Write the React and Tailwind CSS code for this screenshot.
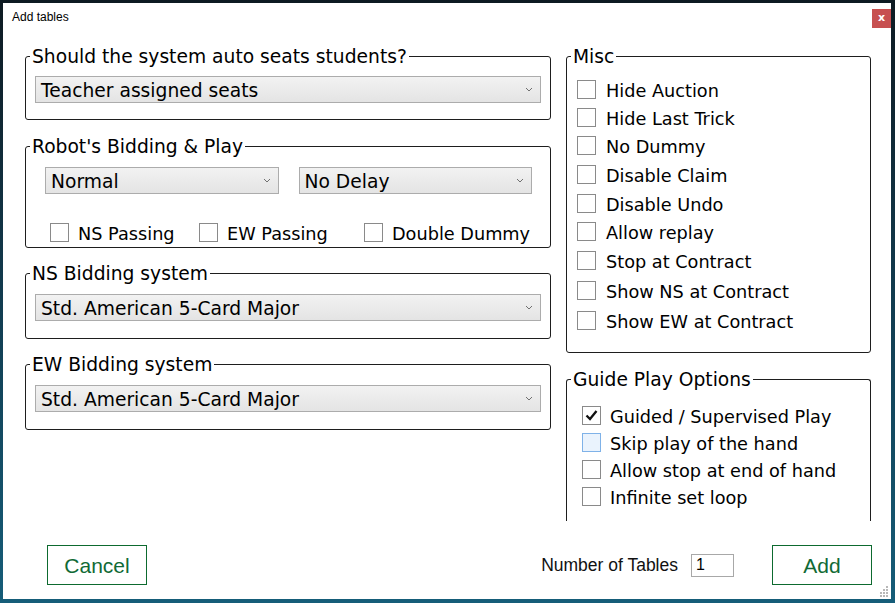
import React from "react";

function Chevron() {
  return (
    <svg width="8" height="5" viewBox="0 0 8 5" className="shrink-0">
      <path d="M1 1 L4 4 L7 1" fill="none" stroke="#707070" strokeWidth="1" />
    </svg>
  );
}

function Select({ value }) {
  return (
    <div className="h-[27px] border border-[#acacac] bg-linear-to-b from-[#f2f2f2] to-[#e4e4e4] flex items-center justify-between pl-[5px] pr-[7px]">
      <span className="pt-[2px] text-[18.7px] leading-[22px] text-black whitespace-nowrap">{value}</span>
      <Chevron />
    </div>
  );
}

function Box({ checked, focus }) {
  return (
    <span
      className={
        focus
          ? "w-[19px] h-[19px] shrink-0 border border-[#7fb2e8] bg-[#eaf3fd]"
          : "w-[19px] h-[19px] shrink-0 border border-[#8a8a8a] bg-white flex items-center justify-center"
      }
    >
      {checked && (
        <svg width="17" height="17" viewBox="0 0 17 17">
          <path d="M3.5 8.5 L7 12 L13.5 4" fill="none" stroke="#111" strokeWidth="2.3" />
        </svg>
      )}
    </span>
  );
}

function Check({ label, checked, focus, gap = "gap-[9px]", className = "" }) {
  return (
    <div className={"flex items-center h-[19px] " + gap + " " + className}>
      <Box checked={checked} focus={focus} />
      <span className="pt-[4px] text-[17.7px] leading-[19px] text-black whitespace-nowrap">{label}</span>
    </div>
  );
}

function Group({ title, className = "", children }) {
  return (
    <fieldset className={"border border-[#1e1e1e] rounded-[3px] " + className}>
      <legend className="ml-[4px] px-[2px] pt-[2px] text-[18.7px] leading-[20px] text-black whitespace-nowrap">
        {title}
      </legend>
      {children}
    </fieldset>
  );
}

const misc = [
  ["Hide Auction", "mt-0"],
  ["Hide Last Trick", "mt-[9px]"],
  ["No Dummy", "mt-[9px]"],
  ["Disable Claim", "mt-[10px]"],
  ["Disable Undo", "mt-[10px]"],
  ["Allow replay", "mt-[9px]"],
  ["Stop at Contract", "mt-[10px]"],
  ["Show NS at Contract", "mt-[11px]"],
  ["Show EW at Contract", "mt-[11px]"],
];

export default function App() {
  return (
    <div className="w-[895px] h-[603px] pt-[3px] pl-[3px] pr-[4px] pb-[4px] bg-linear-to-b from-[#0d1a22] via-[#113c50] to-[#155d79] font-['DejaVu_Sans',sans-serif]">
      <div className="relative h-full bg-white flex flex-col">
        {/* title bar */}
        <div className="flex justify-between items-start h-[42px]">
          <span className="pl-[9px] pt-[7px] text-[12px] leading-[14px] text-black font-['Liberation_Sans',sans-serif]">
            Add tables
          </span>
          <span className="mt-[6px] w-[19px] h-[19px] bg-[#c75050] text-white flex items-center justify-center text-[11px] font-bold leading-none pb-[2px]">
            x
          </span>
        </div>

        <div className="flex items-start pl-[22px] pr-[20px] gap-[15px]">
          {/* left column */}
          <div className="w-[526px] flex flex-col">
            <Group title="Should the system auto seats students?">
              <div className="pt-[9px] pb-[16px] px-[9px]">
                <Select value="Teacher assigned seats" />
              </div>
            </Group>

            <Group title="Robot's Bidding & Play" className="mt-[15px]">
              <div className="pt-[10px] pb-[5px] pl-[19px] pr-[18px]">
                <div className="grid grid-cols-2 gap-[20px]">
                  <Select value="Normal" />
                  <Select value="No Delay" />
                </div>
                <div className="flex mt-[29px] ml-[5px]">
                  <Check label="NS Passing" className="w-[149px]" />
                  <Check label="EW Passing" className="w-[165px]" />
                  <Check label="Double Dummy" />
                </div>
              </div>
            </Group>

            <Group title="NS Bidding system" className="mt-[14px]">
              <div className="pt-[10px] pb-[17px] px-[9px]">
                <Select value="Std. American 5-Card Major" />
              </div>
            </Group>

            <Group title="EW Bidding system" className="mt-[14px]">
              <div className="pt-[10px] pb-[17px] px-[9px]">
                <Select value="Std. American 5-Card Major" />
              </div>
            </Group>
          </div>

          {/* right column */}
          <div className="w-[305px] flex flex-col">
            <Group title="Misc">
              <div className="pt-[13px] pb-[22px] pl-[10px]">
                {misc.map(([label, mt]) => (
                  <Check key={label} label={label} gap="gap-[10px]" className={mt} />
                ))}
              </div>
            </Group>

            <Group title="Guide Play Options" className="mt-[15px] h-[153px] border-b-0 rounded-b-none">
              <div className="pt-[16px] pl-[15px] flex flex-col gap-[8px]">
                <Check label="Guided / Supervised Play" checked />
                <Check label="Skip play of the hand" focus />
                <Check label="Allow stop at end of hand" />
                <Check label="Infinite set loop" />
              </div>
            </Group>
          </div>
        </div>

        {/* bottom buttons */}
        <div className="flex items-center mt-[24px] pl-[44px] pr-[19px] font-['Liberation_Sans',sans-serif]">
          <button className="w-[100px] h-[40px] border border-[#0d6a2f] text-[#116a35] text-[21px] leading-none">
            Cancel
          </button>
          <div className="flex-1" />
          <span className="text-[17.5px] leading-[20px] text-[#111]">Number of Tables</span>
          <div className="ml-[13px] w-[43px] h-[23px] border border-[#a8a8a8] flex items-center pl-[4px] text-[16px] text-black">
            1
          </div>
          <button className="ml-[38px] w-[100px] h-[40px] border border-[#0d6a2f] text-[#116a35] text-[21px] leading-none">
            Add
          </button>
        </div>

        {/* resize grip */}
        <svg width="11" height="11" viewBox="0 0 11 11" className="absolute right-[2px] bottom-[2px]">
          {[
            [8, 0], [8, 3], [5, 3], [8, 6], [5, 6], [2, 6], [8, 9], [5, 9], [2, 9],
          ].map(([x, y]) => (
            <rect key={x + "-" + y} x={x} y={y} width="2" height="2" fill="#b8b8b8" />
          ))}
        </svg>
      </div>
    </div>
  );
}
